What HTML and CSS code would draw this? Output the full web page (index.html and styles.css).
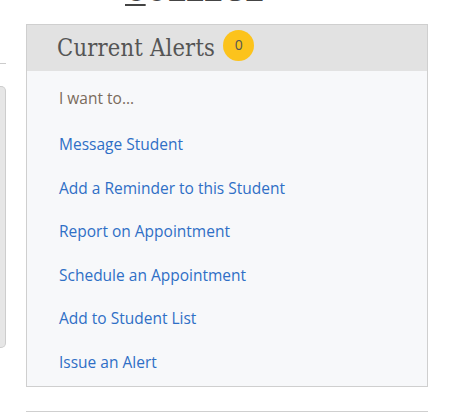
FILE: index.html
```html
<!DOCTYPE html>
<html lang="en">
<head>
    <meta charset="UTF-8">
    <meta name="viewport" content="width=device-width, initial-scale=1.0">
    <title>Current Alerts</title>
    <link rel="stylesheet" href="styles.css">
</head>
<body>
    <div class="page-title"><span class="key">C</span>OLLEGE</div>
    <div class="layout">
        <aside class="side">
            <div class="side-rule"></div>
            <div class="side-box"></div>
        </aside>
        <div class="main-col">
            <section class="alerts">
                <header class="alerts-head">
                    <h2>Current Alerts</h2>
                    <span class="badge">0</span>
                </header>
                <div class="alerts-body">
                    <p class="intro">I want to...</p>
                    <ul class="actions">
                        <li><a href="#">Message Student</a></li>
                        <li><a href="#">Add a Reminder to this Student</a></li>
                        <li><a href="#">Report on Appointment</a></li>
                        <li><a href="#">Schedule an Appointment</a></li>
                        <li><a href="#">Add to Student List</a></li>
                        <li><a href="#">Issue an Alert</a></li>
                    </ul>
                </div>
            </section>
            <div class="next-panel"></div>
        </div>
    </div>
</body>
</html>
```

FILE: styles.css
```css
*{
    margin:0;
    padding:0;
    box-sizing: border-box;
}
body{
    width:461px;
    height:413px;
    overflow:hidden;
    background:#fff;
    font-family:'Open Sans', sans-serif;
}
/* title of the page, mostly scrolled off the top */
.page-title{
    margin-top:-22px;
    margin-left:125px;
    height:28px;
    font-family:'DejaVu Serif', serif;
    font-size:27px;
    line-height:27px;
    color:#444;
}
.page-title .key{
    text-decoration: underline;
    text-decoration-thickness:2px;
    text-underline-offset:3px;
}
.layout{
    display:flex;
    margin-top:18px;
}
.side{
    width:6px;
    margin-right:20px;
}
.side-rule{
    margin-top:39px;
    border-top:1px solid #ccc;
}
.side-box{
    margin-top:22px;
    height:262px;
    border:1px solid #cdcdcd;
    border-left:none;
    border-radius:0 5px 5px 0;
    background:#e6e6e6;
}
.main-col{
    width:402px;
}
.alerts{
    border:1px solid #cfcfcf;
    background:#f7f8fa;
}
.alerts-head{
    display:flex;
    align-items:center;
    height:46px;
    padding-left:30px;
    background:#e2e2e2;
}
h2{
    font-family:'DejaVu Serif', serif;
    font-stretch: condensed;
    font-weight:400;
    font-size:23.5px;
    color:#555;
    letter-spacing:0.2px;
}
.badge{
    display:flex;
    justify-content:center;
    align-items:center;
    width:31px;
    height:31px;
    margin-left:8px;
    margin-top:-5px;
    padding-bottom:2px;
    border-radius:50%;
    background:#fcc31c;
    color:#555;
    font-size:14px;
}
.alerts-body{
    padding:16px 0 2px 32px;
}
.intro{
    font-size:15.5px;
    line-height:22px;
    color:#7a6b5c;
    margin-bottom:14px;
}
.actions{
    list-style:none;
}
.actions li{
    line-height:43.5px;
    font-size:15.5px;
}
.actions a{
    color:#2f6fc6;
    text-decoration:none;
}
.next-panel{
    margin-top:24px;
    height:20px;
    border-top:1px solid #cfcfcf;
}
```
